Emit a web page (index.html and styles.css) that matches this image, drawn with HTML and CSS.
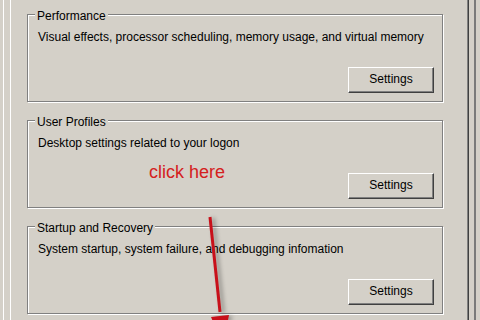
FILE: index.html
```html
<!DOCTYPE html>
<html lang="en">
<head>
    <meta charset="UTF-8">
    <title>Advanced</title>
    <link rel="stylesheet" href="styles.css">
</head>
<body>
    <div class="window">
        <div class="page">
            <div class="group">
                <span class="legend">Performance</span>
                <p class="desc">Visual effects, processor scheduling, memory usage, and virtual memory</p>
                <button class="button">Settings</button>
            </div>
            <div class="group">
                <span class="legend">User Profiles</span>
                <p class="desc">Desktop settings related to your logon</p>
                <span class="note">click here</span>
                <button class="button">Settings</button>
            </div>
            <div class="group">
                <span class="legend">Startup and Recovery</span>
                <p class="desc">System startup, system failure, and debugging infomation</p>
                <button class="button">Settings</button>
            </div>
        </div>
    </div>

    <svg class="arrow" width="480" height="320" viewBox="0 0 480 320">
        <line x1="210" y1="217" x2="220" y2="312" stroke="#c8101a" stroke-width="3"/>
        <polygon points="211,317 229,315 223,345" fill="#c8101a"/>
    </svg>
</body>
</html>
```

FILE: styles.css
```css
* {
    box-sizing: border-box;
}
body {
    margin: 0;
    height: 320px;
    overflow: hidden;
    background-color: #d4d0c8;
    font-family: "Liberation Sans", Arial, sans-serif;
    font-size: 12px;
    color: #000;
}
.window {
    width: 473px;
    height: 320px;
    margin-left: 3px;
    padding: 0 5px 0 6px;
    border-left: 1px solid #fff;
    border-right: 2px solid #7a7a7a;
}
.page {
    height: 100%;
    padding: 14px 25px 0 16px;
    border-left: 1px solid #fff;
    border-right: 1px solid #404040;
    box-shadow: inset -1px 0 #808080;
}
.group {
    position: relative;
    display: flex;
    flex-direction: column;
    height: 88px;
    margin-bottom: 18px;
    padding: 15px 8px 8px 10px;
    border: 1px solid #808080;
    box-shadow: inset 1px 1px #fff, 1px 1px #fff;
}
.legend {
    position: absolute;
    top: -6px;
    left: 7px;
    padding: 0 2px;
    line-height: 14px;
    background-color: #d4d0c8;
}
.desc {
    margin: 0;
    line-height: 14px;
}
.note {
    position: absolute;
    top: 41px;
    left: 121px;
    font-size: 18px;
    line-height: 20px;
    color: #d42020;
}
.button {
    align-self: flex-end;
    width: 86px;
    height: 26px;
    margin-top: auto;
    padding: 0 0 2px;
    font-family: inherit;
    font-size: 12px;
    color: #000;
    background-color: #d4d0c8;
    border: 1px solid;
    border-color: #fff #404040 #404040 #fff;
    box-shadow: inset -1px -1px #808080;
}
.arrow {
    position: absolute;
    top: 0;
    left: 0;
    pointer-events: none;
    filter: drop-shadow(3px 1px 2px rgba(0, 0, 0, 0.35));
}
```
